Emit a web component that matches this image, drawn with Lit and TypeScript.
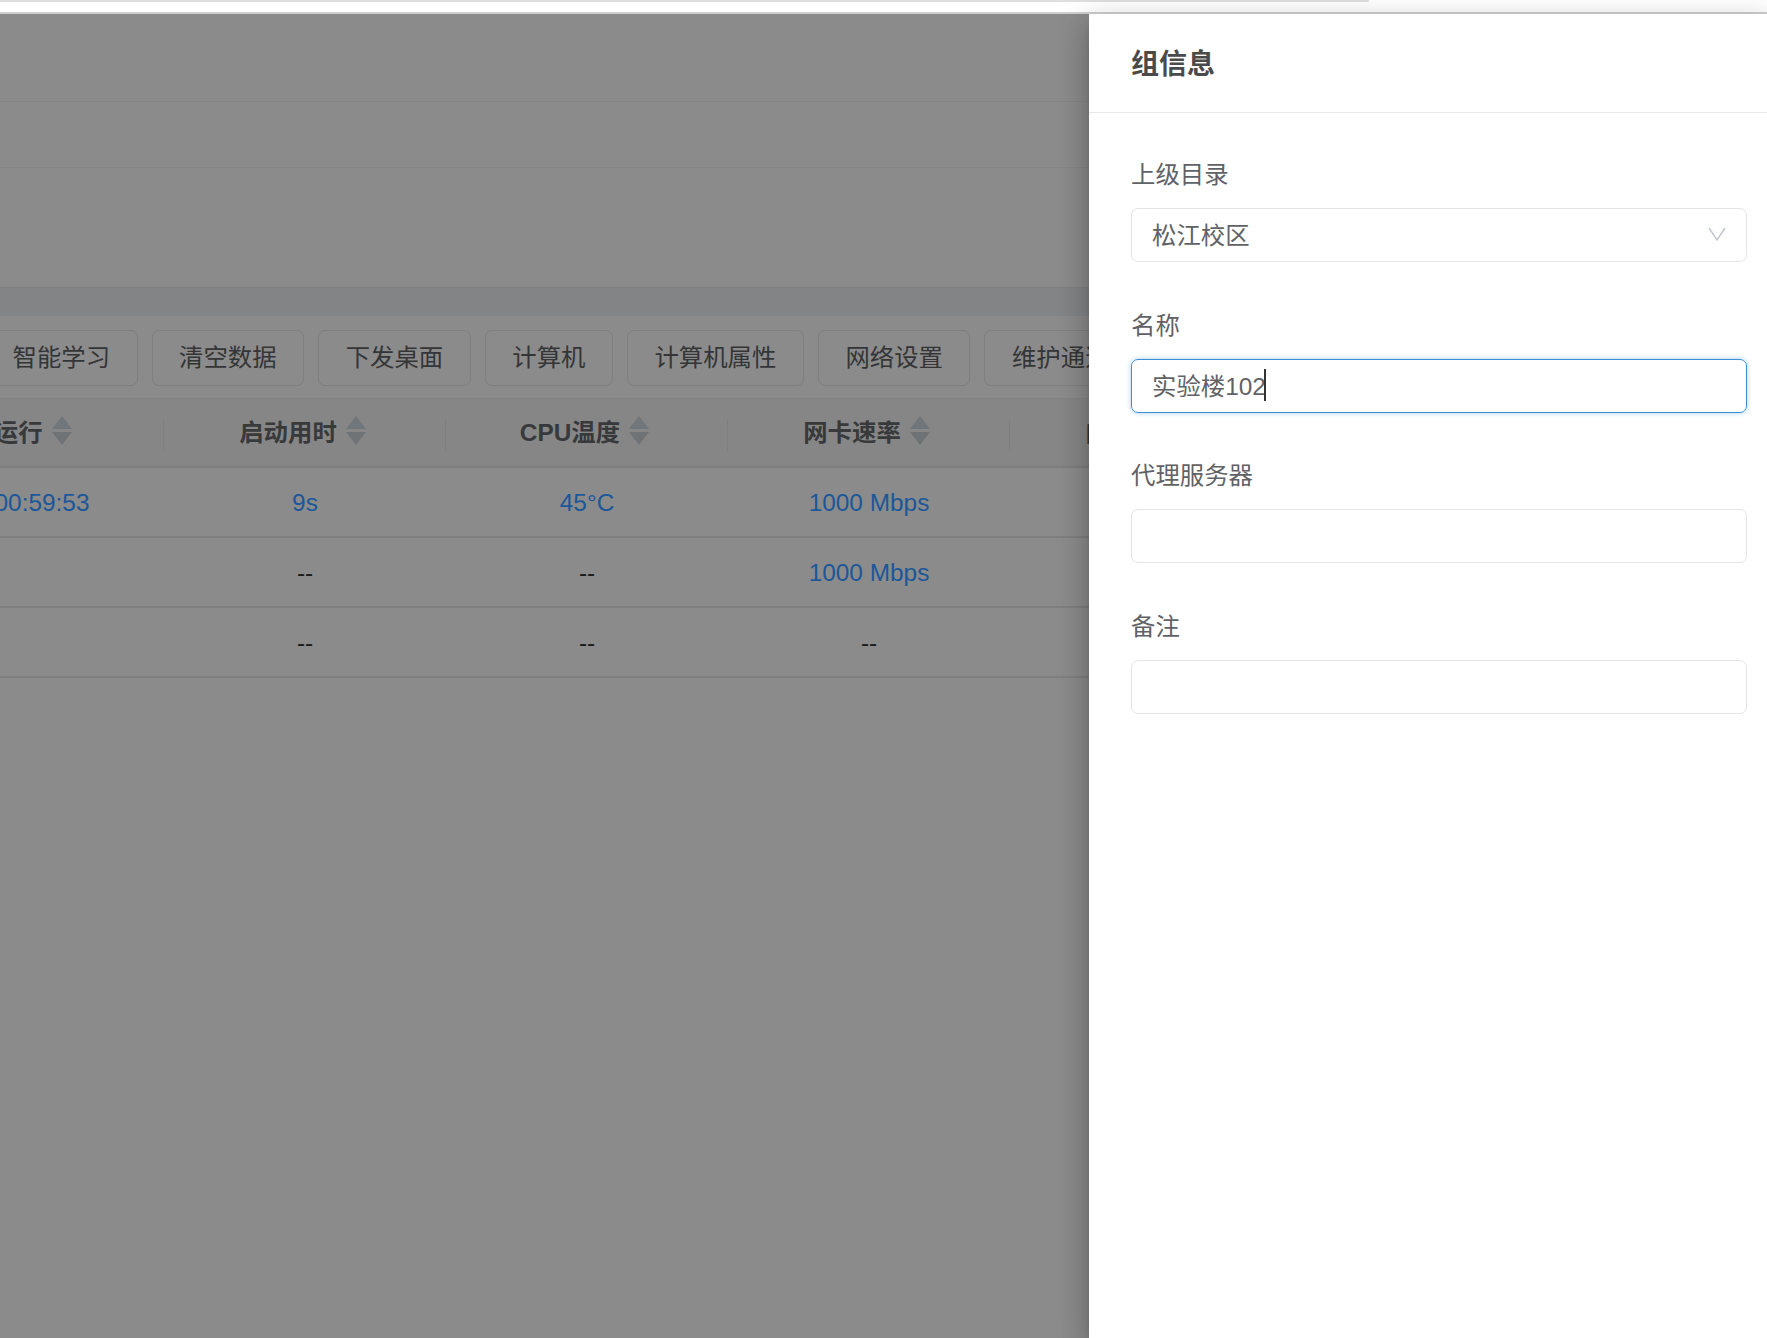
import { LitElement, html, css } from "lit";
import { customElement } from "lit/decorators.js";

const buttons = [ "智能学习", "清空数据", "下发桌面", "计算机", "计算机属性", "网络设置", "维护通道" ];
const columns = [ "已运行", "启动用时", "CPU温度", "网卡速率", "内存使用" ];
const rows =
[
    [ "1天00:59:53", "9s", "45°C", "1000 Mbps", "" ],
    [ "", "--", "--", "1000 Mbps", "" ],
    [ "", "--", "--", "--", "" ]
];

@customElement("app-root")
export class AppRoot extends LitElement
{
    static styles = css`
        :host
        {
            display     : flex;
            flex-direction : column;
            height      : 100vh;
            overflow    : hidden;
            background  : #ffffff;
            font-family : "Liberation Sans", "Noto Sans CJK SC", sans-serif;
            font-size   : 24.4px;
        }

        .topbar
        {
            flex          : none;
            height        : 12px;
            border-bottom : 2px solid #cfcfcf;
            background    : #ffffff;
        }

        .topbar div
        {
            width         : 1369px;
            height        : 2px;
            background    : #dedede;
            border-radius : 0 2px 2px 0;
        }

        .main
        {
            flex     : 1;
            display  : flex;
            min-height : 0;
        }

        .page
        {
            flex       : 1;
            min-width  : 0;
            overflow   : hidden;
            background : #8b8b8b;
        }

        .band
        {
            box-sizing    : border-box;
            border-bottom : 1px solid #848484;
        }

        .band.one { height : 88px; }
        .band.two { height : 66px; }
        .band.three { height : 119px; border-bottom : 0; }

        .strip
        {
            height     : 29px;
            background : #838485;
            border-top : 1px solid #808081;
            box-sizing : border-box;
        }

        .toolbar
        {
            display       : flex;
            gap           : 14px;
            box-sizing    : border-box;
            height        : 83px;
            padding       : 14px 0 0 0;
            margin-left   : -15px;
            border-bottom : 1px solid #838383;
        }

        .toolbar span
        {
            flex          : none;
            box-sizing    : border-box;
            height        : 56px;
            padding       : 0 26.5px;
            border        : 1px solid #7e7f80;
            border-radius : 7px;
            line-height   : 54px;
            color         : #343537;
        }

        .table
        {
            display               : grid;
            grid-template-columns : repeat(5, 282px);
            margin-left           : -118px;
            width                 : 1410px;
        }

        .th
        {
            display       : flex;
            align-items   : center;
            justify-content : center;
            gap           : 9px;
            box-sizing    : border-box;
            height        : 69px;
            padding       : 0 5px 5px 0;
            background    : linear-gradient(#7f7f7f, #7f7f7f) right 20px / 1px 32px no-repeat, #868686;
            border-bottom : 2px solid #7d7d7d;
            font-weight   : 700;
            color         : #38393b;
        }

        .th svg
        {
            flex : none;
        }

        .td
        {
            box-sizing    : border-box;
            height        : 70px;
            border-bottom : 2px solid #7f7f7f;
            line-height   : 70px;
            text-align    : center;
            color         : #1c1c1c;
        }

        .td.value
        {
            color : #1b5799;
        }

        .drawer
        {
            flex       : none;
            position   : relative;
            width      : 678px;
            background : #ffffff;
            box-shadow : 0 8px 10px -5px rgba(0, 0, 0, 0.2), 0 16px 24px 2px rgba(0, 0, 0, 0.14), 0 6px 30px 5px rgba(0, 0, 0, 0.12);
        }

        .drawer header
        {
            box-sizing    : border-box;
            height        : 99px;
            padding       : 0 0 0 42px;
            border-bottom : 1px solid #e8e8e8;
            line-height   : 102px;
            font-size     : 28px;
            font-weight   : 700;
            color         : #4a4a4a;
        }

        .form
        {
            padding : 45px 20px 0 42px;
        }

        .field
        {
            margin-bottom : 46.5px;
        }

        .field label
        {
            display       : block;
            height        : 34px;
            margin-bottom : 16px;
            line-height   : 34px;
            color         : #606266;
        }

        .input
        {
            display       : flex;
            align-items   : center;
            justify-content : space-between;
            box-sizing    : border-box;
            height        : 54px;
            padding       : 0 20px 3px 20px;
            border        : 1px solid #e2e4e9;
            border-radius : 7px;
            color         : #606266;
        }

        .input.focused
        {
            justify-content : flex-start;
            padding-bottom : 2px;
            border-color : #3f8fd2;
            box-shadow   : 0 0 5px rgba(102, 175, 233, 0.6);
        }

        .caret
        {
            width       : 2px;
            height      : 32px;
            margin-left : -2px;
            background  : #333333;
        }
    `;

    renderSorter ()
    {
        return html`
            <svg width="20" height="29" viewBox="0 0 20 29">
                <polygon points="10,0 20,13 0,13" fill="#70767a"></polygon>
                <polygon points="0,16 20,16 10,29" fill="#707376"></polygon>
            </svg>
        `;
    }

    renderField (label: string, content: unknown = "", cls = "")
    {
        return html`
            <div class="field">
                <label>${ label }</label>
                <div class="input ${ cls }">${ content }</div>
            </div>
        `;
    }

    render ()
    {
        const chevron = html`
            <svg width="18" height="14" viewBox="0 0 18 14" fill="none" stroke="#c0c4cc" stroke-width="1.4">
                <polyline points="1,1 9,13 17,1"></polyline>
            </svg>
        `;

        return html`
            <div class="topbar"><div></div></div>
            <div class="main">
                <div class="page">
                    <div class="band one"></div>
                    <div class="band two"></div>
                    <div class="band three"></div>
                    <div class="strip"></div>
                    <div class="toolbar">
                        ${ buttons.map(b => html`<span>${ b }</span>`) }
                    </div>
                    <div class="table">
                        ${ columns.map(c => html`<div class="th"><span>${ c }</span>${ this.renderSorter() }</div>`) }
                        ${ rows.map(r => r.map(v => html`<div class="td ${ v === "--" ? "" : "value" }">${ v }</div>`)) }
                    </div>
                </div>
                <aside class="drawer">
                    <header>组信息</header>
                    <div class="form">
                        ${ this.renderField("上级目录", html`<span>松江校区</span>${ chevron }`) }
                        ${ this.renderField("名称", html`<span>实验楼102</span><i class="caret"></i>`, "focused") }
                        ${ this.renderField("代理服务器") }
                        ${ this.renderField("备注") }
                    </div>
                </aside>
            </div>
        `;
    }
}
